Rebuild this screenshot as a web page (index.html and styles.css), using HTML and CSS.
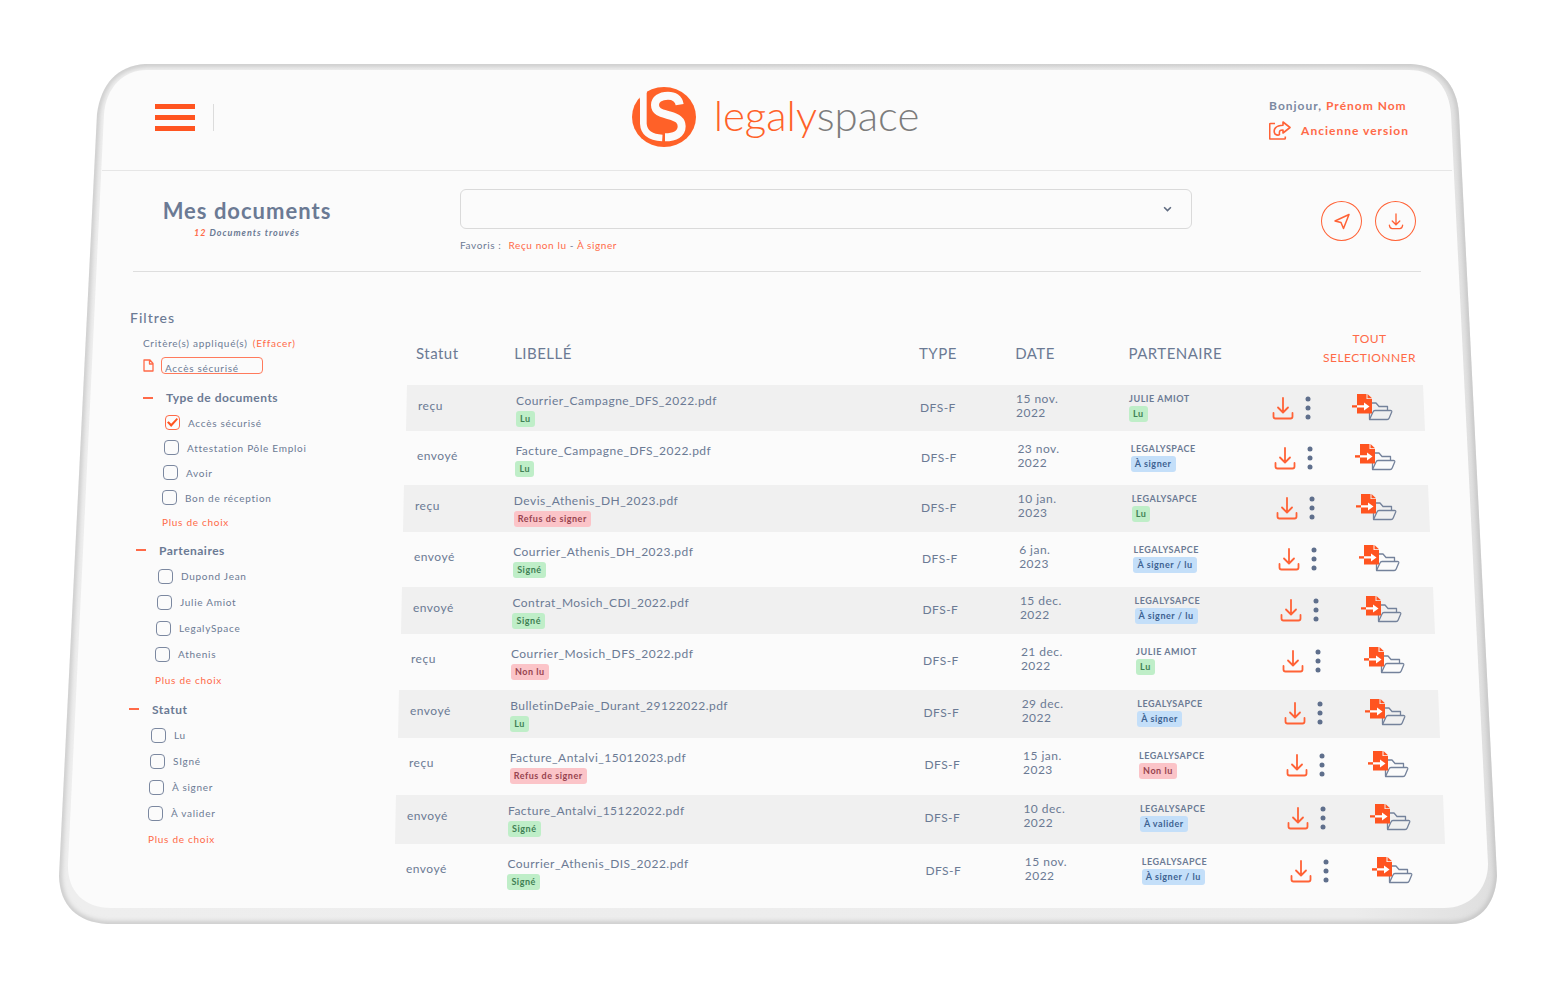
FILE: index.html
```html
<!DOCTYPE html>
<html lang="fr">
<head>
<meta charset="utf-8">
<title>Legalyspace – Mes documents</title>
<link rel="stylesheet" href="styles.css">
</head>
<body>
<svg class="symbols" aria-hidden="true">
  <symbol id="i-download" viewBox="0 0 22 24">
    <path d="M11 2v14M6 11.500l5 5 5-5M1.500 17v3.500a2 2 0 0 0 2 2h15a2 2 0 0 0 2-2V17" fill="none" stroke="#ff6236" stroke-width="1.800" stroke-linecap="round" stroke-linejoin="round"/>
  </symbol>
  <symbol id="i-dots" viewBox="0 0 6 24">
    <g fill="#5f6f8c"><circle cx="3" cy="3" r="2.500"/><circle cx="3" cy="12" r="2.500"/><circle cx="3" cy="21" r="2.500"/></g>
  </symbol>
  <symbol id="i-move" viewBox="0 0 41 27">
    <path d="M20 9h4l3 3.500h8.500V16M17.500 25V19" fill="none" stroke="#74829b" stroke-width="1.300" stroke-linejoin="round"/>
    <path d="M17.500 25.500L21 18c.4-1 1-1.500 2-1.500h15.500c1 0 1.500.6 1.200 1.500l-2.500 6c-.4 1-1 1.500-2 1.500z" fill="none" stroke="#74829b" stroke-width="1.300" stroke-linejoin="round"/>
    <path d="M5 0h9.500v5H20v14.500H5z" fill="#ff5420"/>
    <path d="M15.500 0L20 4.200h-4.500z" fill="#ff5420"/>
    <path d="M0 11.200h5v2.400H0z" fill="#ff5420"/>
    <path d="M5 11.200h7V8.500l5.500 3.900-5.500 4.100v-2.900H5z" fill="#fff"/>
  </symbol>
</svg>
<div class="tablet">
  <svg class="frame" viewBox="0 0 1438 860" preserveAspectRatio="none" aria-hidden="true">
    <defs>
      <linearGradient id="shell" x1="0" x2="1" y1="0" y2="0"><stop offset="0" stop-color="#eeeeee"/><stop offset="0.900" stop-color="#ececec"/><stop offset="1" stop-color="#dfdfdf"/></linearGradient>
      <filter id="soft" x="-5%" y="-5%" width="110%" height="110%"><feGaussianBlur stdDeviation="2.500"/></filter>
      <clipPath id="edge"><path d="M86 0H1352C1380 1 1398 20 1400 50L1438 812C1436 842 1420 859 1392 860H48C18 858 1 842 0 812L38 50C42 20 58 2 86 0z"/></clipPath>
    </defs>
    <g clip-path="url(#edge)">
      <rect width="1438" height="860" fill="url(#shell)"/>
      <path d="M86 0H1352C1380 1 1398 20 1400 50L1438 812C1436 842 1420 859 1392 860H48C18 858 1 842 0 812L38 50C42 20 58 2 86 0z" fill="none" stroke="#bcbcbc" stroke-width="4" filter="url(#soft)"/>
    </g>
    <path d="M88 6H1350C1376 6 1390 24 1392 50L1429 800C1429 826 1410 844 1385 844H52C24 844 8 826 9 800L45 50C47 24 64 6 88 6z" fill="#fbfbfb"/>
  </svg>

  <header class="topbar">
    <div class="topbar-menu">
      <button class="burger" type="button" aria-label="Menu"><span></span><span></span><span></span></button>
    </div>
    <a class="brand" href="#">
      <svg class="brand-mark" viewBox="96 50 192 180" aria-hidden="true">
        <ellipse cx="192" cy="140" rx="96" ry="90" fill="#ff6128"/>
        <path d="M130 60V160Q132 200 187 203" fill="none" stroke="#fbfbfb" stroke-width="20"/>
        <path d="M112 50H140V66L120 88z" fill="#fbfbfb"/>
        <path d="M239 103C236 84 222 76 204 76C180 76 165 88 165 104C165 126 188 129 208 135C233 142 245 150 245 168C245 190 226 201 195 201" fill="none" stroke="#fbfbfb" stroke-width="24"/>
      </svg>
      <span class="brand-name">legaly<span class="brand-tail">space</span></span>
    </a>
    <div class="account">
      <span>Bonjour, <a href="#">Prénom Nom</a></span>
      <a class="legacy" href="#">
        <svg class="i-share" viewBox="0 0 22 19" aria-hidden="true"><path d="M6 2.500H1.500a.8.8 0 0 0-.8.800v13.900c0 .5.300.8.800.8h14c.5 0 .8-.3.800-.8V15.500M14 1l7 5.500-7 5.500V9c-3-.2-4 1-3.500 4.500-1.500 1.500-3 .5-4.500-.5C3.500 8 7 4.500 14 4.300z" fill="none" stroke="#ff6236" stroke-width="1.600" stroke-linejoin="round"/></svg>
        Ancienne version
      </a>
    </div>
  </header>

  <section class="heading">
    <div class="title">
      <h1>Mes documents</h1>
      <p><span class="accent">12</span> Documents trouvés</p>
    </div>
    <div class="search">
      <div class="picker">
        <select aria-label="Recherche"><option></option></select>
        <svg class="chevron" viewBox="0 0 8 6" aria-hidden="true"><path d="M1 1l3 3 3-3" fill="none" stroke="#5f6b80" stroke-width="1.400"/></svg>
      </div>
      <p class="favs">Favoris : <span class="favs-links"><a href="#">Reçu non lu</a> - <a href="#">À signer</a></span></p>
    </div>
    <div class="actions">
      <button type="button" aria-label="Envoyer"><svg viewBox="0 0 16 16"><path d="M15 1L1 7.500l6 1.500 2.500 6z" fill="none" stroke="#ff6236" stroke-width="1.500" stroke-linejoin="round"/></svg></button>
      <button type="button" aria-label="Télécharger"><svg viewBox="0 0 16 18"><path d="M8 1v11M4 8.500l4 4 4-4M1 13c.3 2.500 1 3.500 3 3.500h8c2 0 2.700-1 3-3.500" fill="none" stroke="#ff6236" stroke-width="1.400" stroke-linecap="round"/></svg></button>
    </div>
  </section>

  <div class="content">
    <aside class="filters">
      <h2>Filtres</h2>
      <p class="criteria">Critère(s) appliqué(s) <a href="#">(Effacer)</a></p>
      <div class="applied">
        <svg class="i-file" viewBox="0 0 11 13" aria-hidden="true"><path d="M1 1h6l3 3.500V12H1zM6.500 1v4H10" fill="none" stroke="#ff6a48" stroke-width="1.300" stroke-linejoin="round"/></svg>
        <input type="text" value="Accès sécurisé" aria-label="Critère appliqué" readonly>
      </div>
      <fieldset class="group">
        <legend>Type de documents</legend>
        <label><input type="checkbox" checked>Accès sécurisé</label>
        <label><input type="checkbox">Attestation Pôle Emploi</label>
        <label><input type="checkbox">Avoir</label>
        <label><input type="checkbox">Bon de réception</label>
        <a href="#">Plus de choix</a>
      </fieldset>
      <fieldset class="group group-2">
        <legend>Partenaires</legend>
        <label><input type="checkbox">Dupond Jean</label>
        <label><input type="checkbox">Julie Amiot</label>
        <label><input type="checkbox">LegalySpace</label>
        <label><input type="checkbox">Athenis</label>
        <a href="#">Plus de choix</a>
      </fieldset>
      <fieldset class="group group-3">
        <legend>Statut</legend>
        <label><input type="checkbox">Lu</label>
        <label><input type="checkbox">SIgné</label>
        <label><input type="checkbox">À signer</label>
        <label><input type="checkbox">À valider</label>
        <a href="#">Plus de choix</a>
      </fieldset>
    </aside>

    <table class="docs">
      <thead>
        <tr>
          <th>Statut</th><th>LIBELLÉ</th><th>TYPE</th><th>DATE</th><th>PARTENAIRE</th>
          <th class="select-all"><button type="button">TOUT<br>SELECTIONNER</button></th>
        </tr>
      </thead>
      <tbody id="rows"></tbody>
    </table>
  </div>
</div>
<script src="script.js"></script>
</body>
</html>
```

FILE: styles.css
```css
* { box-sizing: border-box; }

:root {
  --track: 0.04em;
  --track-fine: 0.06em;
}

body {
  margin: 0;
  background: #fff;
  color: #6b7a94;
  font-family: Lato, "Liberation Sans", sans-serif;
  font-size: 12px;
  letter-spacing: var(--track);
}

h1, h2, p { margin: 0; }
a { color: #ff6a48; text-decoration: none; }
button { background: none; border: 0; padding: 0; font: inherit; letter-spacing: inherit; color: inherit; cursor: pointer; }
.accent { color: #ff6a48; }
.symbols { position: absolute; width: 0; height: 0; }

.tablet {
  position: relative;
  margin: 64px 59px 58px;
  padding-bottom: 27px;
}
.frame { position: absolute; inset: 0; width: 100%; height: 100%; z-index: -1; }

/* top bar */
.topbar {
  display: grid;
  grid-template-columns: 1fr auto 1fr;
  align-items: center;
  height: 107px;
  margin: 0 45px 0 43px;
  padding: 0 43px 0 53px;
  border-bottom: 1px solid #e6e6e6;
}
.topbar-menu { display: flex; }
.burger {
  display: flex;
  flex-direction: column;
  justify-content: space-between;
  width: 59px;
  height: 27px;
  border-right: 1px solid #dcdcdc;
}
.burger span { width: 40px; height: 5px; background: #ff5420; }
.brand { display: flex; align-items: center; gap: 18px; margin-right: 13px; color: #ff6128; }
.brand-mark { width: 64px; height: 60px; }
.brand-name { padding-bottom: 4px; font-size: 42px; font-weight: 300; line-height: 56px; letter-spacing: 0; }
.brand-tail { color: #7c7c7c; }
.account {
  justify-self: end;
  display: grid;
  gap: 5px;
  padding-top: 2px;
  font-size: 12px;
  font-weight: 700;
  line-height: 20px;
  letter-spacing: 1px;
}
.account > span { color: #7c89a1; }
.legacy { display: flex; align-items: center; gap: 10px; }
.i-share { width: 22px; height: 19px; }

/* title, search, actions */
.heading {
  display: grid;
  grid-template-columns: 327px 1fr 229px;
  height: 101px;
  margin: 0 76px 0 74px;
  border-bottom: 1px solid #dedede;
}
.title { width: 228px; padding-top: 25px; text-align: center; letter-spacing: 1px; }
.title h1 { font-size: 22px; font-weight: 700; line-height: 30px; white-space: nowrap; }
.title p { font-size: 9px; font-style: italic; font-weight: 700; line-height: 14px; }
.search { padding-top: 18px; }
.picker { position: relative; }
.picker select {
  display: block;
  width: 100%;
  height: 40px;
  appearance: none;
  background: transparent;
  border: 1px solid #dadada;
  border-radius: 6px;
}
.chevron { position: absolute; right: 20px; top: 17px; width: 9px; height: 7px; }
.favs { padding-top: 8px; font-size: 10px; line-height: 16px; letter-spacing: var(--track-fine); }
.favs-links { padding-left: 4px; }
.actions { display: flex; justify-content: flex-end; gap: 13px; padding: 30px 5px 0 0; }
.actions button {
  display: grid;
  place-items: center;
  width: 41px;
  height: 40px;
  border: 1px solid #ff6236;
  border-radius: 50%;
}
.actions svg { width: 16px; height: 17px; }

/* filters */
.content { display: flex; padding: 36px 50px 0 69px; }
.filters { flex: 0 0 266px; letter-spacing: var(--track-fine); }
.filters h2 { padding-left: 2px; font-size: 14px; font-weight: 500; line-height: 20px; letter-spacing: 1px; }
.criteria { padding: 5px 0 0 15px; font-size: 10px; line-height: 20px; }
.criteria a { padding-left: 2px; }
.applied { display: flex; align-items: center; gap: 7px; padding: 4px 0 0 15px; }
.i-file { width: 11px; height: 13px; }
.applied input {
  width: 102px;
  height: 17px;
  padding: 5px 3px 0;
  border: 1px solid #ff7a5c;
  border-radius: 4px;
  background: transparent;
  color: inherit;
  font: 10px/10px Lato, sans-serif;
  letter-spacing: inherit;
}
.group { --row: 25px; min-width: 0; margin: 11px 0 0 15px; padding: 0; border: 0; font-size: 10px; }
.group-2 { --row: 26px; margin: 2px 0 0 8px; }
.group-3 { --row: 26px; margin: 3px 0 0 1px; }
.group legend {
  display: flex;
  align-items: center;
  gap: 13px;
  height: var(--row);
  padding: 0;
  font-size: 12px;
  font-weight: 700;
  letter-spacing: var(--track);
}
.group legend::before { content: ""; width: 10px; height: 2px; background: #ff6a48; }
.group label { display: flex; align-items: center; gap: 8px; height: var(--row); padding-left: 22px; }
.group label:nth-of-type(2) { padding-left: 21px; }
.group label:nth-of-type(3) { padding-left: 20px; }
.group label:nth-of-type(4) { padding-left: 19px; }
.group input {
  display: grid;
  place-items: center;
  width: 15px;
  height: 15px;
  margin: 0;
  appearance: none;
  border: 1px solid #7b88a0;
  border-radius: 4px;
}
.group input:checked { border-color: #ff6a48; }
.group input:checked::before {
  content: "";
  width: 11px;
  height: 9px;
  background: #ff5420;
  clip-path: polygon(0 50%, 15% 35%, 38% 65%, 88% 0, 100% 15%, 38% 100%);
}
.group > a { display: block; padding-left: 19px; line-height: var(--row); }

/* documents */
.docs { flex: 1; display: block; margin-top: 21px; min-width: 0; }
.docs thead { display: block; }
.docs tbody { display: flex; flex-direction: column; gap: 4px; }
.docs tr {
  display: grid;
  grid-template-columns: 98fr 404fr 96fr 113fr 143fr 80fr 73fr;
  padding-left: 12px;
}
.docs th, .docs td { display: block; min-width: 0; padding: 0; text-align: left; font-weight: 400; white-space: nowrap; }
.docs thead tr { height: 56px; margin: 0 22px 0 10px; }
.docs th { padding-top: 14px; font-size: 15px; line-height: 20px; }
.docs .select-all { grid-column: 6 / 8; justify-self: end; padding: 0 9px 0 0; color: #ff6a48; text-align: center; }
.select-all button { font-size: 12px; line-height: 19px; }

.docs tbody tr { height: 46px; margin-left: calc(12px - var(--left)); margin-right: calc(22px - var(--right)); }
.docs tbody tr:nth-child(n+3) { height: 47px; }
.docs tbody tr:nth-child(n+6) { height: 48px; }
.docs tbody tr:nth-child(n+8) { height: 49px; }
.docs tbody tr:nth-child(odd) {
  background: #f0f0f0;
  clip-path: polygon(1px 0, calc(100% - 2px) 0, 100% 100%, 0 100%);
}
.docs .state { padding-top: 11px; line-height: 20px; }
.docs .name { padding-top: 6px; line-height: 20px; }
.docs .type { padding-top: 13px; line-height: 20px; }
.docs .date { padding-top: 7px; line-height: 14px; }
.docs .partner { padding-top: 7px; font-size: 9px; font-weight: 700; line-height: 14px; letter-spacing: var(--track-fine); }
.docs .tools { display: flex; align-items: flex-start; gap: 11px; padding-top: 11px; }
.docs .move { padding-top: 9px; }
.docs svg { display: block; }
.i-download { width: 22px; height: 24px; }
.i-dots { width: 6px; height: 24px; }
.i-move { width: 41px; height: 27px; }

.badge {
  display: block;
  width: max-content;
  padding: 0 4px;
  border-radius: 3px;
  font-size: 9px;
  font-weight: 700;
  line-height: 16px;
  letter-spacing: var(--track-fine);
}
.green { background: #bfeec8; color: #3f8054; }
.red { background: #fbc4c8; color: #97434f; }
.blue { background: #c4dff9; color: #3d6291; }
```

FILE: script.js
```js
const documents = [
  ["reçu", "Courrier_Campagne_DFS_2022.pdf", "Lu", "15 nov.", "2022", "JULIE AMIOT", "Lu"],
  ["envoyé", "Facture_Campagne_DFS_2022.pdf", "Lu", "23 nov.", "2022", "LEGALYSPACE", "À signer"],
  ["reçu", "Devis_Athenis_DH_2023.pdf", "Refus de signer", "10 jan.", "2023", "LEGALYSAPCE", "Lu"],
  ["envoyé", "Courrier_Athenis_DH_2023.pdf", "Signé", "6 jan.", "2023", "LEGALYSAPCE", "À signer / lu"],
  ["envoyé", "Contrat_Mosich_CDI_2022.pdf", "Signé", "15 dec.", "2022", "LEGALYSAPCE", "À signer / lu"],
  ["reçu", "Courrier_Mosich_DFS_2022.pdf", "Non lu", "21 dec.", "2022", "JULIE AMIOT", "Lu"],
  ["envoyé", "BulletinDePaie_Durant_29122022.pdf", "Lu", "29 dec.", "2022", "LEGALYSAPCE", "À signer"],
  ["reçu", "Facture_Antalvi_15012023.pdf", "Refus de signer", "15 jan.", "2023", "LEGALYSAPCE", "Non lu"],
  ["envoyé", "Facture_Antalvi_15122022.pdf", "Signé", "10 dec.", "2022", "LEGALYSAPCE", "À valider"],
  ["envoyé", "Courrier_Athenis_DIS_2022.pdf", "Signé", "15 nov.", "2022", "LEGALYSAPCE", "À signer / lu"]
];

const tones = { "Lu": "green", "Signé": "green", "Refus de signer": "red", "Non lu": "red" };
const badge = text => `<span class="badge ${tones[text] || "blue"}">${text}</span>`;

// Rows widen towards the bottom of the tilted screen.
document.getElementById("rows").innerHTML = documents.map((d, i) => {
  const left = Math.round(i * 4 / 3);
  const right = Math.round(i * 5 / 2);
  return `<tr style="--left:${left}px;--right:${right}px">
    <td class="state">${d[0]}</td>
    <td class="name">${d[1]}${badge(d[2])}</td>
    <td class="type">DFS-F</td>
    <td class="date">${d[3]}<br>${d[4]}</td>
    <td class="partner">${d[5]}${badge(d[6])}</td>
    <td class="tools">
      <button type="button" aria-label="Télécharger"><svg class="i-download"><use href="#i-download"/></svg></button>
      <button type="button" aria-label="Options"><svg class="i-dots"><use href="#i-dots"/></svg></button>
    </td>
    <td class="move"><button type="button" aria-label="Classer"><svg class="i-move"><use href="#i-move"/></svg></button></td>
  </tr>`;
}).join("");
```
